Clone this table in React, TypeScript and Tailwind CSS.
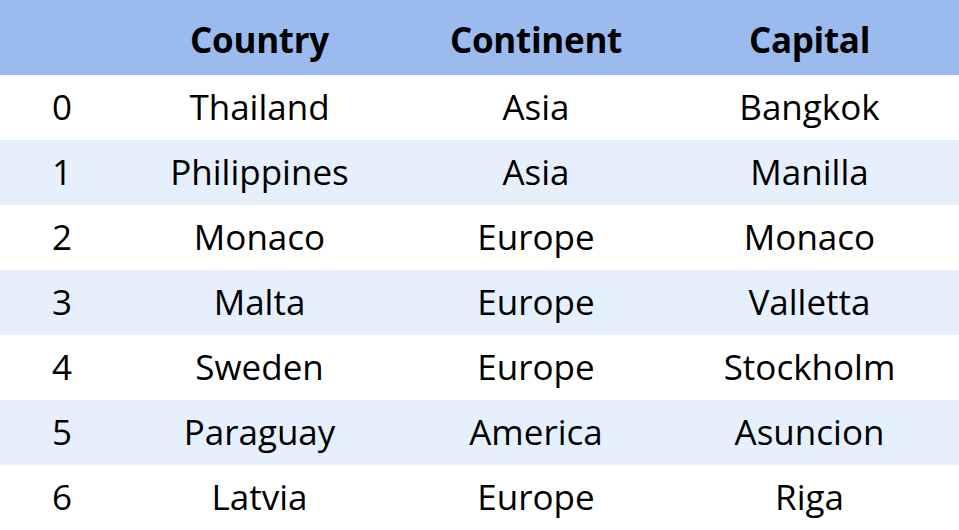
import React from "react";

const rows = [
  ["0", "Thailand", "Asia", "Bangkok"],
  ["1", "Philippines", "Asia", "Manilla"],
  ["2", "Monaco", "Europe", "Monaco"],
  ["3", "Malta", "Europe", "Valletta"],
  ["4", "Sweden", "Europe", "Stockholm"],
  ["5", "Paraguay", "America", "Asuncion"],
  ["6", "Latvia", "Europe", "Riga"],
];

export default function App() {
  return (
    <div
      className="w-[959px] h-[530px] bg-white text-black overflow-hidden"
      style={{ fontFamily: '"Open Sans", "Noto Sans", sans-serif' }}
    >
      <div className="grid grid-cols-[124px_271px_282px_265px] h-[75px] bg-[#9bbbef] items-center text-[35px] font-bold pt-[5px] tracking-[-0.3px]">
        <div></div>
        <div className="text-center">Country</div>
        <div className="text-center">Continent</div>
        <div className="text-center">Capital</div>
      </div>
      {rows.map((r, i) => (
        <div
          key={i}
          className={
            "grid grid-cols-[124px_271px_282px_265px] h-[65px] items-center text-[35px] " +
            (i % 2 === 1 ? "bg-[#e6f0fd]" : "bg-white")
          }
        >
          {r.map((c, j) => (
            <div key={j} className="text-center">
              {c}
            </div>
          ))}
        </div>
      ))}
    </div>
  );
}
